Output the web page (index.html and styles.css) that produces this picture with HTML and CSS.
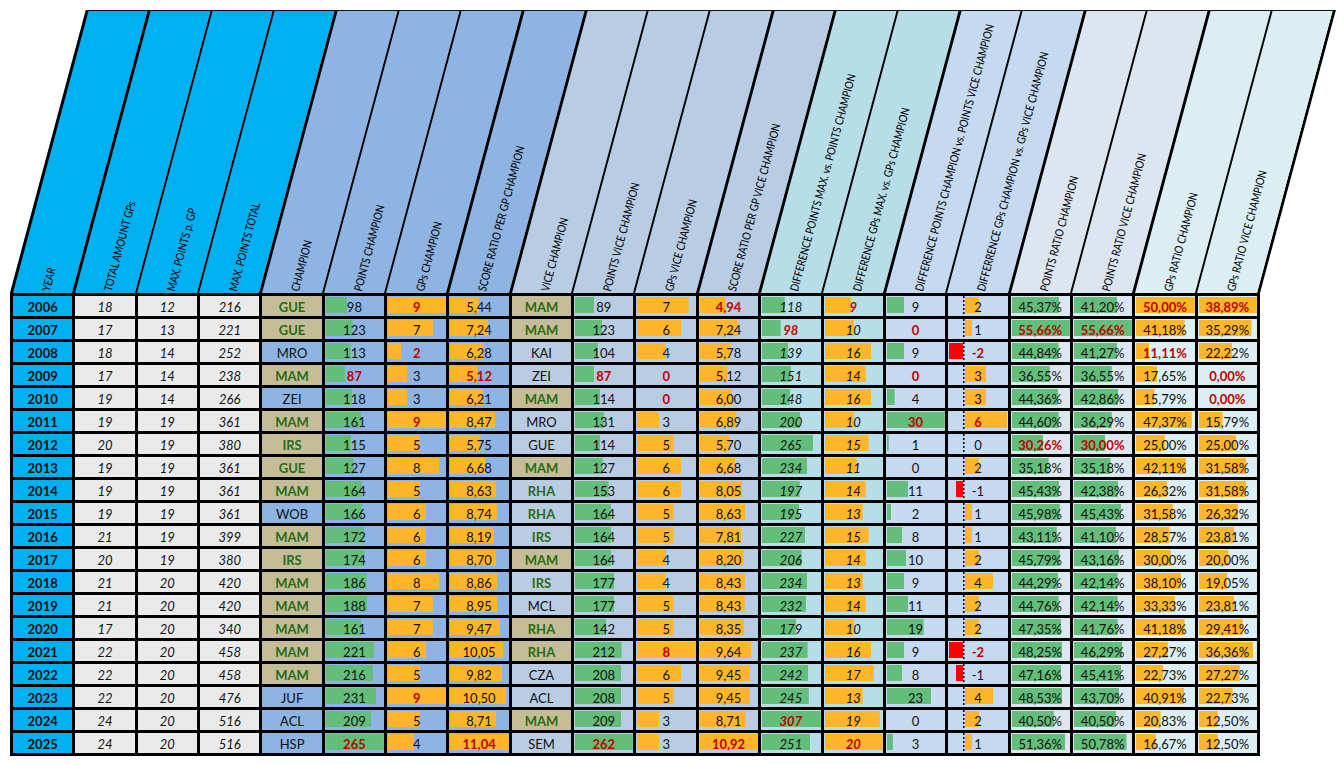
FILE: index.html
```html
<!DOCTYPE html>
<html lang="en">
<head>
<meta charset="utf-8">
<title>Champions statistics 2006-2025</title>
<link rel="stylesheet" href="styles.css">
</head>
<body>
<div class="page">
  <div class="head">
    <div class="hc h1"><span>YEAR</span></div>
    <div class="hc h1"><span>TOTAL AMOUNT GPs</span></div>
    <div class="hc h1 thin"><span>MAX. POINTS p. GP</span></div>
    <div class="hc h1 thin"><span>MAX. POINTS TOTAL</span></div>
    <div class="hc h2"><span>CHAMPION</span></div>
    <div class="hc h2 thin"><span>POINTS CHAMPION</span></div>
    <div class="hc h2 thin"><span>GPs CHAMPION</span></div>
    <div class="hc h2"><span>SCORE RATIO PER GP CHAMPION</span></div>
    <div class="hc h3"><span>VICE CHAMPION</span></div>
    <div class="hc h3 thin"><span>POINTS VICE CHAMPION</span></div>
    <div class="hc h3 thin"><span>GPs VICE CHAMPION</span></div>
    <div class="hc h3"><span>SCORE RATIO PER GP VICE CHAMPION</span></div>
    <div class="hc h4"><span>DIFFERENCE POINTS MAX. vs. POINTS CHAMPION</span></div>
    <div class="hc h4 thin"><span>DIFFERENCE GPs MAX. vs. GPs CHAMPION</span></div>
    <div class="hc h5"><span>DIFFERENCE POINTS CHAMPION vs. POINTS VICE CHAMPION</span></div>
    <div class="hc h5 thin"><span>DIFFERRENCE GPs CHAMPION vs. GPs VICE CHAMPION</span></div>
    <div class="hc h6"><span>POINTS RATIO CHAMPION</span></div>
    <div class="hc h6 thin"><span>POINTS RATIO VICE CHAMPION</span></div>
    <div class="hc h7"><span>GPs RATIO CHAMPION</span></div>
    <div class="hc h7 thin"><span>GPs RATIO VICE CHAMPION</span></div>
  </div>

  <div class="grid">
    <!-- 2006 -->
    <div class="y">2006</div><div class="g">18</div><div class="g">12</div><div class="g">216</div>
    <div class="c1 t">GUE</div><div class="c1 gb" style="--w:36%">98</div><div class="c1 ob r" style="--w:98%">9</div><div class="c1 ob" style="--w:48%">5,44</div>
    <div class="c2 t">MAM</div><div class="c2 gb" style="--w:33%">89</div><div class="c2 ob" style="--w:86%">7</div><div class="c2 ob r" style="--w:44%">4,94</div>
    <div class="c3 gb" style="--w:38%">118</div><div class="c3 ob r" style="--w:44%">9</div>
    <div class="c4 gb" style="--w:29%">9</div><div class="c4 ax" style="--p:14px">2</div>
    <div class="c5 gb" style="--w:80%">45,37%</div><div class="c5 gb" style="--w:73%">41,20%</div>
    <div class="c6 ob r" style="--w:98%">50,00%</div><div class="c6 ob r" style="--w:98%">38,89%</div>
    <!-- 2007 -->
    <div class="y">2007</div><div class="g">17</div><div class="g">13</div><div class="g">221</div>
    <div class="c1 t">GUE</div><div class="c1 gb" style="--w:45%">123</div><div class="c1 ob" style="--w:76%">7</div><div class="c1 ob" style="--w:64%">7,24</div>
    <div class="c2 t">MAM</div><div class="c2 gb" style="--w:46%">123</div><div class="c2 ob" style="--w:74%">6</div><div class="c2 ob" style="--w:65%">7,24</div>
    <div class="c3 gb r" style="--w:31%">98</div><div class="c3 ob" style="--w:49%">10</div>
    <div class="c4 gb r">0</div><div class="c4 ax" style="--p:7px">1</div>
    <div class="c5 gb r" style="--w:98%">55,66%</div><div class="c5 gb r" style="--w:98%">55,66%</div>
    <div class="c6 ob" style="--w:81%">41,18%</div><div class="c6 ob" style="--w:89%">35,29%</div>
    <!-- 2008 -->
    <div class="y">2008</div><div class="g">18</div><div class="g">14</div><div class="g">252</div>
    <div class="c1">MRO</div><div class="c1 gb" style="--w:42%">113</div><div class="c1 ob r" style="--w:22%">2</div><div class="c1 ob" style="--w:56%">6,28</div>
    <div class="c2">KAI</div><div class="c2 gb" style="--w:39%">104</div><div class="c2 ob" style="--w:49%">4</div><div class="c2 ob" style="--w:52%">5,78</div>
    <div class="c3 gb" style="--w:44%">139</div><div class="c3 ob" style="--w:78%">16</div>
    <div class="c4 gb" style="--w:29%">9</div><div class="c4 ax r" style="--n:14px">-2</div>
    <div class="c5 gb" style="--w:79%">44,84%</div><div class="c5 gb" style="--w:73%">41,27%</div>
    <div class="c6 ob r" style="--w:22%">11,11%</div><div class="c6 ob" style="--w:56%">22,22%</div>
    <!-- 2009 -->
    <div class="y">2009</div><div class="g">17</div><div class="g">14</div><div class="g">238</div>
    <div class="c1 t">MAM</div><div class="c1 gb r" style="--w:32%">87</div><div class="c1 ob" style="--w:33%">3</div><div class="c1 ob r" style="--w:45%">5,12</div>
    <div class="c2">ZEI</div><div class="c2 gb r" style="--w:33%">87</div><div class="c2 ob r">0</div><div class="c2 ob" style="--w:46%">5,12</div>
    <div class="c3 gb" style="--w:48%">151</div><div class="c3 ob" style="--w:69%">14</div>
    <div class="c4 gb r">0</div><div class="c4 ax" style="--p:21px">3</div>
    <div class="c5 gb" style="--w:64%">36,55%</div><div class="c5 gb" style="--w:64%">36,55%</div>
    <div class="c6 ob" style="--w:35%">17,65%</div><div class="c6 ob r">0,00%</div>
    <!-- 2010 -->
    <div class="y">2010</div><div class="g">19</div><div class="g">14</div><div class="g">266</div>
    <div class="c1">ZEI</div><div class="c1 gb" style="--w:44%">118</div><div class="c1 ob" style="--w:33%">3</div><div class="c1 ob" style="--w:55%">6,21</div>
    <div class="c2 t">MAM</div><div class="c2 gb" style="--w:43%">114</div><div class="c2 ob r">0</div><div class="c2 ob" style="--w:54%">6,00</div>
    <div class="c3 gb" style="--w:47%">148</div><div class="c3 ob" style="--w:78%">16</div>
    <div class="c4 gb" style="--w:13%">4</div><div class="c4 ax" style="--p:21px">3</div>
    <div class="c5 gb" style="--w:78%">44,36%</div><div class="c5 gb" style="--w:75%">42,86%</div>
    <div class="c6 ob" style="--w:31%">15,79%</div><div class="c6 ob r">0,00%</div>
    <!-- 2011 -->
    <div class="y">2011</div><div class="g">19</div><div class="g">19</div><div class="g">361</div>
    <div class="c1 t">MAM</div><div class="c1 gb" style="--w:60%">161</div><div class="c1 ob r" style="--w:98%">9</div><div class="c1 ob" style="--w:75%">8,47</div>
    <div class="c2">MRO</div><div class="c2 gb" style="--w:49%">131</div><div class="c2 ob" style="--w:37%">3</div><div class="c2 ob" style="--w:62%">6,89</div>
    <div class="c3 gb" style="--w:64%">200</div><div class="c3 ob" style="--w:49%">10</div>
    <div class="c4 gb r" style="--w:98%">30</div><div class="c4 ax r" style="--p:42px">6</div>
    <div class="c5 gb" style="--w:79%">44,60%</div><div class="c5 gb" style="--w:64%">36,29%</div>
    <div class="c6 ob" style="--w:93%">47,37%</div><div class="c6 ob" style="--w:40%">15,79%</div>
    <!-- 2012 -->
    <div class="y">2012</div><div class="g">20</div><div class="g">19</div><div class="g">380</div>
    <div class="c1 t">IRS</div><div class="c1 gb" style="--w:43%">115</div><div class="c1 ob" style="--w:54%">5</div><div class="c1 ob" style="--w:51%">5,75</div>
    <div class="c2">GUE</div><div class="c2 gb" style="--w:43%">114</div><div class="c2 ob" style="--w:61%">5</div><div class="c2 ob" style="--w:51%">5,70</div>
    <div class="c3 gb" style="--w:85%">265</div><div class="c3 ob" style="--w:74%">15</div>
    <div class="c4 gb" style="--w:3%">1</div><div class="c4 ax">0</div>
    <div class="c5 gb r" style="--w:53%">30,26%</div><div class="c5 gb r" style="--w:53%">30,00%</div>
    <div class="c6 ob" style="--w:49%">25,00%</div><div class="c6 ob" style="--w:63%">25,00%</div>
    <!-- 2013 -->
    <div class="y">2013</div><div class="g">19</div><div class="g">19</div><div class="g">361</div>
    <div class="c1 t">GUE</div><div class="c1 gb" style="--w:47%">127</div><div class="c1 ob" style="--w:87%">8</div><div class="c1 ob" style="--w:59%">6,68</div>
    <div class="c2 t">MAM</div><div class="c2 gb" style="--w:47%">127</div><div class="c2 ob" style="--w:74%">6</div><div class="c2 ob" style="--w:60%">6,68</div>
    <div class="c3 gb" style="--w:75%">234</div><div class="c3 ob" style="--w:54%">11</div>
    <div class="c4 gb">0</div><div class="c4 ax" style="--p:14px">2</div>
    <div class="c5 gb" style="--w:62%">35,18%</div><div class="c5 gb" style="--w:62%">35,18%</div>
    <div class="c6 ob" style="--w:83%">42,11%</div><div class="c6 ob" style="--w:80%">31,58%</div>
    <!-- 2014 -->
    <div class="y">2014</div><div class="g">19</div><div class="g">19</div><div class="g">361</div>
    <div class="c1 t">MAM</div><div class="c1 gb" style="--w:61%">164</div><div class="c1 ob" style="--w:54%">5</div><div class="c1 ob" style="--w:77%">8,63</div>
    <div class="c2 w">RHA</div><div class="c2 gb" style="--w:57%">153</div><div class="c2 ob" style="--w:74%">6</div><div class="c2 ob" style="--w:72%">8,05</div>
    <div class="c3 gb" style="--w:63%">197</div><div class="c3 ob" style="--w:69%">14</div>
    <div class="c4 gb" style="--w:36%">11</div><div class="c4 ax" style="--n:7px">-1</div>
    <div class="c5 gb" style="--w:80%">45,43%</div><div class="c5 gb" style="--w:75%">42,38%</div>
    <div class="c6 ob" style="--w:52%">26,32%</div><div class="c6 ob" style="--w:80%">31,58%</div>
    <!-- 2015 -->
    <div class="y">2015</div><div class="g">19</div><div class="g">19</div><div class="g">361</div>
    <div class="c1">WOB</div><div class="c1 gb" style="--w:61%">166</div><div class="c1 ob" style="--w:65%">6</div><div class="c1 ob" style="--w:78%">8,74</div>
    <div class="c2 w">RHA</div><div class="c2 gb" style="--w:61%">164</div><div class="c2 ob" style="--w:61%">5</div><div class="c2 ob" style="--w:77%">8,63</div>
    <div class="c3 gb" style="--w:62%">195</div><div class="c3 ob" style="--w:64%">13</div>
    <div class="c4 gb" style="--w:7%">2</div><div class="c4 ax" style="--p:7px">1</div>
    <div class="c5 gb" style="--w:81%">45,98%</div><div class="c5 gb" style="--w:80%">45,43%</div>
    <div class="c6 ob" style="--w:62%">31,58%</div><div class="c6 ob" style="--w:66%">26,32%</div>
    <!-- 2016 -->
    <div class="y">2016</div><div class="g">21</div><div class="g">19</div><div class="g">399</div>
    <div class="c1 t">MAM</div><div class="c1 gb" style="--w:64%">172</div><div class="c1 ob" style="--w:65%">6</div><div class="c1 ob" style="--w:73%">8,19</div>
    <div class="c2 w">IRS</div><div class="c2 gb" style="--w:61%">164</div><div class="c2 ob" style="--w:61%">5</div><div class="c2 ob" style="--w:70%">7,81</div>
    <div class="c3 gb" style="--w:72%">227</div><div class="c3 ob" style="--w:74%">15</div>
    <div class="c4 gb" style="--w:26%">8</div><div class="c4 ax" style="--p:7px">1</div>
    <div class="c5 gb" style="--w:76%">43,11%</div><div class="c5 gb" style="--w:72%">41,10%</div>
    <div class="c6 ob" style="--w:56%">28,57%</div><div class="c6 ob" style="--w:60%">23,81%</div>
    <!-- 2017 -->
    <div class="y">2017</div><div class="g">20</div><div class="g">19</div><div class="g">380</div>
    <div class="c1 t">IRS</div><div class="c1 gb" style="--w:64%">174</div><div class="c1 ob" style="--w:65%">6</div><div class="c1 ob" style="--w:77%">8,70</div>
    <div class="c2 t">MAM</div><div class="c2 gb" style="--w:61%">164</div><div class="c2 ob" style="--w:49%">4</div><div class="c2 ob" style="--w:74%">8,20</div>
    <div class="c3 gb" style="--w:66%">206</div><div class="c3 ob" style="--w:69%">14</div>
    <div class="c4 gb" style="--w:33%">10</div><div class="c4 ax" style="--p:14px">2</div>
    <div class="c5 gb" style="--w:81%">45,79%</div><div class="c5 gb" style="--w:76%">43,16%</div>
    <div class="c6 ob" style="--w:59%">30,00%</div><div class="c6 ob" style="--w:50%">20,00%</div>
    <!-- 2018 -->
    <div class="y">2018</div><div class="g">21</div><div class="g">20</div><div class="g">420</div>
    <div class="c1 t">MAM</div><div class="c1 gb" style="--w:69%">186</div><div class="c1 ob" style="--w:87%">8</div><div class="c1 ob" style="--w:79%">8,86</div>
    <div class="c2 w">IRS</div><div class="c2 gb" style="--w:66%">177</div><div class="c2 ob" style="--w:49%">4</div><div class="c2 ob" style="--w:76%">8,43</div>
    <div class="c3 gb" style="--w:75%">234</div><div class="c3 ob" style="--w:64%">13</div>
    <div class="c4 gb" style="--w:29%">9</div><div class="c4 ax" style="--p:28px">4</div>
    <div class="c5 gb" style="--w:78%">44,29%</div><div class="c5 gb" style="--w:74%">42,14%</div>
    <div class="c6 ob" style="--w:75%">38,10%</div><div class="c6 ob" style="--w:48%">19,05%</div>
    <!-- 2019 -->
    <div class="y">2019</div><div class="g">21</div><div class="g">20</div><div class="g">420</div>
    <div class="c1 t">MAM</div><div class="c1 gb" style="--w:70%">188</div><div class="c1 ob" style="--w:76%">7</div><div class="c1 ob" style="--w:79%">8,95</div>
    <div class="c2">MCL</div><div class="c2 gb" style="--w:66%">177</div><div class="c2 ob" style="--w:61%">5</div><div class="c2 ob" style="--w:76%">8,43</div>
    <div class="c3 gb" style="--w:74%">232</div><div class="c3 ob" style="--w:69%">14</div>
    <div class="c4 gb" style="--w:36%">11</div><div class="c4 ax" style="--p:14px">2</div>
    <div class="c5 gb" style="--w:79%">44,76%</div><div class="c5 gb" style="--w:74%">42,14%</div>
    <div class="c6 ob" style="--w:65%">33,33%</div><div class="c6 ob" style="--w:60%">23,81%</div>
    <!-- 2020 -->
    <div class="y">2020</div><div class="g">17</div><div class="g">20</div><div class="g">340</div>
    <div class="c1 t">MAM</div><div class="c1 gb" style="--w:60%">161</div><div class="c1 ob" style="--w:76%">7</div><div class="c1 ob" style="--w:84%">9,47</div>
    <div class="c2 t">RHA</div><div class="c2 gb" style="--w:53%">142</div><div class="c2 ob" style="--w:61%">5</div><div class="c2 ob" style="--w:75%">8,35</div>
    <div class="c3 gb" style="--w:57%">179</div><div class="c3 ob" style="--w:49%">10</div>
    <div class="c4 gb" style="--w:62%">19</div><div class="c4 ax" style="--p:14px">2</div>
    <div class="c5 gb" style="--w:83%">47,35%</div><div class="c5 gb" style="--w:74%">41,76%</div>
    <div class="c6 ob" style="--w:81%">41,18%</div><div class="c6 ob" style="--w:74%">29,41%</div>
    <!-- 2021 -->
    <div class="y">2021</div><div class="g">22</div><div class="g">20</div><div class="g">458</div>
    <div class="c1 t">MAM</div><div class="c1 gb" style="--w:82%">221</div><div class="c1 ob" style="--w:65%">6</div><div class="c1 ob" style="--w:89%">10,05</div>
    <div class="c2 t">RHA</div><div class="c2 gb" style="--w:79%">212</div><div class="c2 ob r" style="--w:98%">8</div><div class="c2 ob" style="--w:87%">9,64</div>
    <div class="c3 gb" style="--w:76%">237</div><div class="c3 ob" style="--w:78%">16</div>
    <div class="c4 gb" style="--w:29%">9</div><div class="c4 ax r" style="--n:14px">-2</div>
    <div class="c5 gb" style="--w:85%">48,25%</div><div class="c5 gb" style="--w:82%">46,29%</div>
    <div class="c6 ob" style="--w:53%">27,27%</div><div class="c6 ob" style="--w:92%">36,36%</div>
    <!-- 2022 -->
    <div class="y">2022</div><div class="g">22</div><div class="g">20</div><div class="g">458</div>
    <div class="c1 t">MAM</div><div class="c1 gb" style="--w:80%">216</div><div class="c1 ob" style="--w:54%">5</div><div class="c1 ob" style="--w:87%">9,82</div>
    <div class="c2">CZA</div><div class="c2 gb" style="--w:78%">208</div><div class="c2 ob" style="--w:74%">6</div><div class="c2 ob" style="--w:85%">9,45</div>
    <div class="c3 gb" style="--w:77%">242</div><div class="c3 ob" style="--w:83%">17</div>
    <div class="c4 gb" style="--w:26%">8</div><div class="c4 ax" style="--n:7px">-1</div>
    <div class="c5 gb" style="--w:83%">47,16%</div><div class="c5 gb" style="--w:80%">45,41%</div>
    <div class="c6 ob" style="--w:45%">22,73%</div><div class="c6 ob" style="--w:69%">27,27%</div>
    <!-- 2023 -->
    <div class="y">2023</div><div class="g">22</div><div class="g">20</div><div class="g">476</div>
    <div class="c1">JUF</div><div class="c1 gb" style="--w:85%">231</div><div class="c1 ob r" style="--w:98%">9</div><div class="c1 ob" style="--w:93%">10,50</div>
    <div class="c2">ACL</div><div class="c2 gb" style="--w:78%">208</div><div class="c2 ob" style="--w:61%">5</div><div class="c2 ob" style="--w:85%">9,45</div>
    <div class="c3 gb" style="--w:78%">245</div><div class="c3 ob" style="--w:64%">13</div>
    <div class="c4 gb" style="--w:75%">23</div><div class="c4 ax" style="--p:28px">4</div>
    <div class="c5 gb" style="--w:85%">48,53%</div><div class="c5 gb" style="--w:77%">43,70%</div>
    <div class="c6 ob" style="--w:80%">40,91%</div><div class="c6 ob" style="--w:57%">22,73%</div>
    <!-- 2024 -->
    <div class="y">2024</div><div class="g">24</div><div class="g">20</div><div class="g">516</div>
    <div class="c1">ACL</div><div class="c1 gb" style="--w:77%">209</div><div class="c1 ob" style="--w:54%">5</div><div class="c1 ob" style="--w:77%">8,71</div>
    <div class="c2 t">MAM</div><div class="c2 gb" style="--w:78%">209</div><div class="c2 ob" style="--w:37%">3</div><div class="c2 ob" style="--w:78%">8,71</div>
    <div class="c3 gb r" style="--w:98%">307</div><div class="c3 ob" style="--w:93%">19</div>
    <div class="c4 gb">0</div><div class="c4 ax" style="--p:14px">2</div>
    <div class="c5 gb" style="--w:71%">40,50%</div><div class="c5 gb" style="--w:71%">40,50%</div>
    <div class="c6 ob" style="--w:41%">20,83%</div><div class="c6 ob" style="--w:32%">12,50%</div>
    <!-- 2025 -->
    <div class="y">2025</div><div class="g">24</div><div class="g">20</div><div class="g">516</div>
    <div class="c1">HSP</div><div class="c1 gb r" style="--w:98%">265</div><div class="c1 ob" style="--w:44%">4</div><div class="c1 ob r" style="--w:98%">11,04</div>
    <div class="c2">SEM</div><div class="c2 gb r" style="--w:98%">262</div><div class="c2 ob" style="--w:37%">3</div><div class="c2 ob r" style="--w:98%">10,92</div>
    <div class="c3 gb" style="--w:80%">251</div><div class="c3 ob r" style="--w:98%">20</div>
    <div class="c4 gb" style="--w:10%">3</div><div class="c4 ax" style="--p:7px">1</div>
    <div class="c5 gb" style="--w:90%">51,36%</div><div class="c5 gb" style="--w:89%">50,78%</div>
    <div class="c6 ob" style="--w:33%">16,67%</div><div class="c6 ob" style="--w:32%">12,50%</div>
  </div>
</div>
</body>
</html>
```

FILE: styles.css
```css
html, body {
  margin: 0;
  padding: 0;
  background: #ffffff;
}

body {
  font-family: Lato, "Open Sans", "Liberation Sans", sans-serif;
  color: #111111;
}

.page {
  padding: 10px 0 0 10px;
}

/* ---------- slanted header ---------- */
.head {
  width: 1250px;
  height: 283px;
  box-sizing: border-box;
  border-top: 1px solid #111;
  border-right: 3px solid #000;
  display: grid;
  grid-template-columns: repeat(20, minmax(0, 1fr));
  transform: skewX(-15deg);
  transform-origin: 0 100%;
}

.hc {
  display: flex;
  align-items: flex-end;
  box-sizing: border-box;
  min-width: 0;
  border-left: 3px solid #000;
  padding: 0 0 1px 38px;
}

.hc.thin {
  border-left-width: 2px;
  padding-left: 39px;
}

.hc span {
  flex: none;
  white-space: nowrap;
  font-size: 11.5px;
  line-height: 1;
  color: #000;
  transform-origin: 0 100%;
  transform: skewX(15deg) rotate(-75deg) scaleX(0.83);
}

.h1 { background: #00b0f0; }
.h2 { background: #8db4e2; }
.h3 { background: #b8cce4; }
.h4 { background: #b7dee8; }
.h5 { background: #c5d9f1; }
.h6 { background: #dce6f1; }
.h7 { background: #daeef3; }

/* ---------- data grid ---------- */
.grid {
  width: 1250px;
  box-sizing: border-box;
  padding: 3px;
  gap: 3px;
  background: #000;
  display: grid;
  grid-template-columns: repeat(20, minmax(0, 1fr));
  grid-auto-rows: 20px;
}

.grid > div {
  box-sizing: border-box;
  min-width: 0;
  padding-top: 2px;
  font-size: 13px;
  line-height: 19px;
  text-align: center;
  white-space: nowrap;
  color: #111;
  background-repeat: no-repeat;
}

.y  { background-color: #00b0f0; font-weight: 700; }
.g  { background-color: #eaeaea; font-style: italic; }
.c1 { background-color: #8db4e2; }
.c2 { background-color: #b8cce4; }
.c3 { background-color: #b7dee8; font-style: italic; }
.c4 { background-color: #c5d9f1; }
.c5 { background-color: #dce6f1; }
.c6 { background-color: #daeef3; }

.grid > .t {
  background-color: #c4bd97;
  color: #2a6b15;
  font-weight: 700;
}

.grid > .w {
  color: #2a6b15;
  font-weight: 700;
}

.grid > .r {
  color: #c00000;
  font-weight: 700;
}

/* data bars */
.gb {
  background-image: linear-gradient(#63be7b, #63be7b);
  background-position: 1px 1px;
  background-size: var(--w, 0%) 16px;
}

.ob {
  background-image: linear-gradient(#ffb628, #ffb628);
  background-position: 1px 1px;
  background-size: var(--w, 0%) 16px;
}

/* bar column with negative axis */
.ax {
  background-image:
    repeating-linear-gradient(#000 0 2px, transparent 2px 4px),
    linear-gradient(#ff0000, #ff0000),
    linear-gradient(#ffb628, #ffb628);
  background-size:
    1.5px 100%,
    var(--n, 0px) 16px,
    var(--p, 0px) 16px;
  background-position:
    15px 0,
    calc(15px - var(--n, 0px)) 1px,
    17px 1px;
}
```
